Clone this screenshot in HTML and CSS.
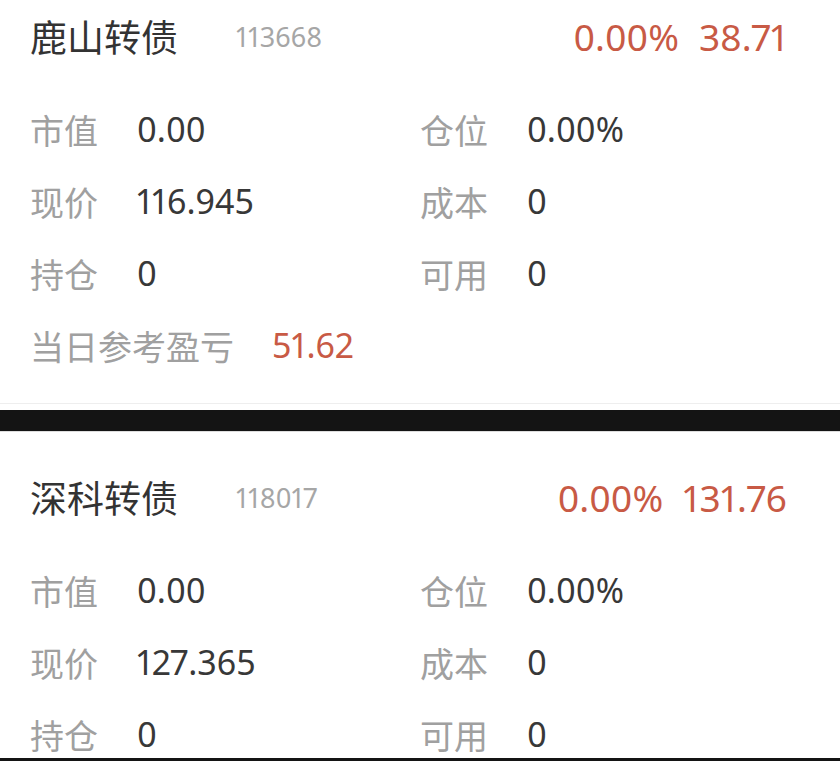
FILE: index.html
```html
<!DOCTYPE html>
<html lang="zh-CN">
<head>
    <meta charset="UTF-8">
    <meta name="viewport" content="width=device-width, initial-scale=1.0">
    <title>持仓</title>
    <link rel="stylesheet" href="styles.css">
</head>
<body>

    <div class="list">
        <div class="card">
            <div class="head">
                <span class="name">鹿山转债</span>
                <span class="code">113668</span>
                <span class="quote">0.00%<span class="price">38.71</span></span>
            </div>
            <div class="grid">
                <span class="label">市值</span><span class="value">0.00</span>
                <span class="label">仓位</span><span class="value">0.00%</span>
                <span class="label">现价</span><span class="value">116.945</span>
                <span class="label">成本</span><span class="value">0</span>
                <span class="label">持仓</span><span class="value">0</span>
                <span class="label">可用</span><span class="value">0</span>
            </div>
            <div class="pnl">
                <span class="label">当日参考盈亏</span><span class="value red">51.62</span>
            </div>
        </div>

        <div class="gap"></div>

        <div class="card clip">
            <div class="head">
                <span class="name">深科转债</span>
                <span class="code">118017</span>
                <span class="quote">0.00%<span class="price">131.76</span></span>
            </div>
            <div class="grid">
                <span class="label">市值</span><span class="value">0.00</span>
                <span class="label">仓位</span><span class="value">0.00%</span>
                <span class="label">现价</span><span class="value">127.365</span>
                <span class="label">成本</span><span class="value">0</span>
                <span class="label">持仓</span><span class="value">0</span>
                <span class="label">可用</span><span class="value">0</span>
            </div>
        </div>

        <div class="gap bottom"></div>
    </div>

</body>
</html>
```

FILE: styles.css
```css
body { margin: 0; background: #fff; font-family: "Noto Sans", "Noto Sans CJK SC", sans-serif; font-variant-numeric: proportional-nums; overflow: hidden; }
.list { margin-top: -29px; }
.card { padding: 35px 53px 22px 30px; border-bottom: 1px solid #eee; }
.card.clip { height: 326px; box-sizing: border-box; overflow: hidden; padding-bottom: 0; border-bottom: none; }
.head { display: flex; align-items: center; height: 60px; margin-bottom: 27px; }
.name { font-size: 37px; color: #333; }
.code { font-size: 27px; color: #a6a6a6; margin-left: 58px; }
.quote { margin-left: auto; font-size: 37px; color: #c85a45; }
.price { margin-left: 20px; }
.grid { display: grid; grid-template-columns: 107px 283px 107px 1fr; grid-auto-rows: 72px; align-items: center; }
.label { font-size: 34px; color: #a0a0a0; }
.value { font-size: 34px; color: #383838; }
.red { color: #c85a45; }
.pnl { display: flex; align-items: center; height: 72px; gap: 38px; }
.gap { height: 21px; margin-top: 6px; background: #141414; border-bottom: 1px solid #ddd; }
.gap.bottom { margin-top: 0; height: 8px; }
```
